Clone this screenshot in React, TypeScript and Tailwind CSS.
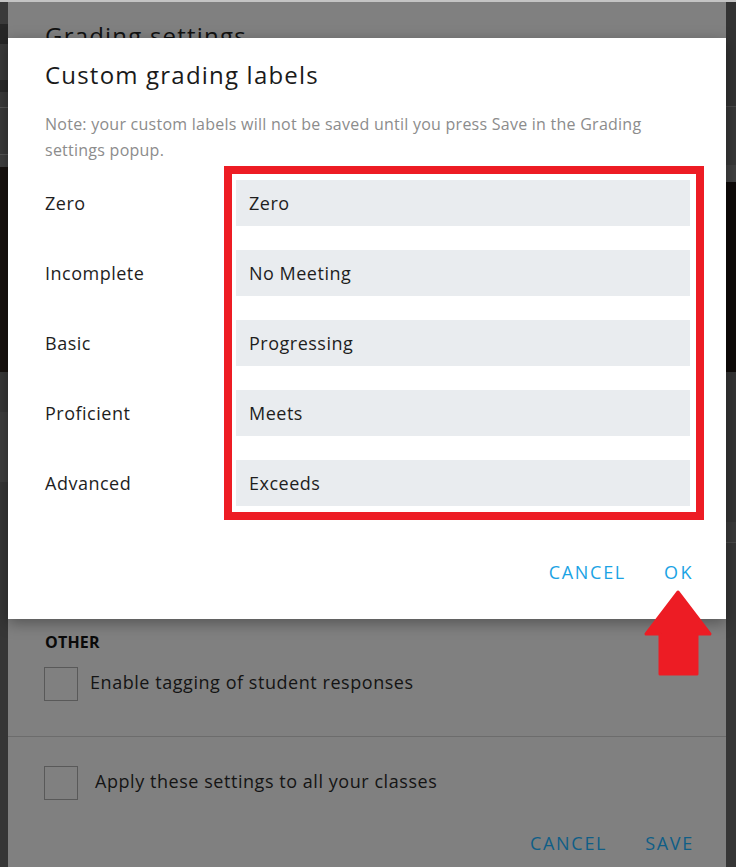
import React from "react";

const labels: [string, string][] = [
  ["Zero", "Zero"],
  ["Incomplete", "No Meeting"],
  ["Basic", "Progressing"],
  ["Proficient", "Meets"],
  ["Advanced", "Exceeds"],
];

function LeftStrip() {
  return (
    <div className="w-[8px] flex flex-col bg-[#3a3a3a]">
      <div className="h-[22px]" />
      <div className="h-[20px] bg-[#262626]" />
      <div className="h-[36px]" />
      <div className="h-[12px] bg-[#2a2a2a]" />
      <div className="h-[15px]" />
      <div className="h-[1px] bg-[#565656]" />
      <div className="h-[46px]" />
      <div className="h-[1px] bg-[#565656]" />
      <div className="h-[12px] bg-[#3f3f3f]" />
      <div className="h-[205px] bg-[#17120f]" />
      <div className="h-[40px] bg-[#383838]" />
      <div className="h-[70px] bg-[#3e3e3e]" />
      <div className="flex-1 bg-[#363636]" />
    </div>
  );
}

function RightStrip() {
  return (
    <div className="w-[10px] flex flex-col bg-[#333333]">
      <div className="h-[104px]" />
      <div className="h-[1px] bg-[#4a4a4a]" />
      <div className="h-[58px] bg-[#383838]" />
      <div className="h-[17px] bg-[#414141]" />
      <div className="h-[190px] bg-[#0f0b09]" />
      <div className="h-[150px] bg-[#343434]" />
      <div className="h-[20px] bg-[#3a3a3a]" />
      <div className="h-[1px] bg-[#4a4a4a]" />
      <div className="flex-1 bg-[#363636]" />
    </div>
  );
}

function Checkbox() {
  return <div className="w-[34px] h-[34px] border border-[#595959] shrink-0" />;
}

export default function App() {
  return (
    <div className="relative w-[736px] h-[867px] overflow-hidden bg-[#3a3a3a] font-['Open_Sans',sans-serif]">
      <div className="h-[2px] bg-[#c4c4c4]" />
      <div className="flex h-[865px]">
        <LeftStrip />
        {/* underlying Grading settings dialog (dimmed) */}
        <div className="w-[718px] bg-[#808080] flex flex-col pt-[18px]">
          <div className="pl-[37px] text-[24px] leading-[32px] tracking-[1.2px] text-[#121212]">
            Grading settings
          </div>
          <div className="h-[579px]" />
          <div className="pl-[37px] text-[16px] leading-[22px] font-bold text-[#0a0a0a] tracking-[0.2px]">
            OTHER
          </div>
          <div className="mt-[14px] pl-[36px] flex items-center h-[34px]">
            <Checkbox />
            <span className="ml-[12px] -mt-[3px] text-[18px] tracking-[0.55px] text-[#141414]">
              Enable tagging of student responses
            </span>
          </div>
          <div className="mt-[35px] h-[1px] bg-[#6c6c6c]" />
          <div className="mt-[29px] pl-[36px] flex items-center h-[34px]">
            <Checkbox />
            <span className="ml-[17px] -mt-[3px] text-[18px] tracking-[0.55px] text-[#141414]">
              Apply these settings to all your classes
            </span>
          </div>
          <div className="mt-[31px] flex justify-end gap-[38px] pr-[32px] text-[18px] leading-[24px] tracking-[1.7px] text-[#0f5e87]">
            <span>CANCEL</span>
            <span>SAVE</span>
          </div>
        </div>
        <RightStrip />
      </div>

      {/* Custom grading labels dialog */}
      <div className="absolute left-[8px] top-[38px] w-[718px] bg-white pt-[21px] pl-[37px] pr-[22px] pb-[35px] shadow-[0_4px_14px_rgba(0,0,0,0.35)]">
        <div className="text-[24px] leading-[32px] tracking-[1.2px] text-[#1a1a1a]">
          Custom grading labels
        </div>
        <div className="mt-[20px] text-[16px] leading-[26px] tracking-[0.25px] text-[#8c8c8c]">
          Note: your custom labels will not be saved until you press Save in the Grading
          <br />
          settings popup.
        </div>
        <div className="mt-[3px] flex">
          <div className="w-[179px] pt-[14px] flex flex-col gap-[24px]">
            {labels.map(([l]) => (
              <div key={l} className="h-[46px] flex items-center text-[18px] tracking-[0.5px] text-[#1e1e1e]">
                {l}
              </div>
            ))}
          </div>
          <div className="w-[480px] border-[8px] border-[#ed1c24] pt-[6px] pb-[6px] pl-[4px] pr-[6px] flex flex-col gap-[24px]">
            {labels.map(([l, v]) => (
              <div key={l} className="h-[46px] bg-[#e9ecef] pl-[13px] flex items-center text-[18px] tracking-[0.5px] text-[#1e1e1e]">
                {v}
              </div>
            ))}
          </div>
        </div>
        <div className="mt-[40px] pr-[10px] flex justify-end gap-[38px] text-[18px] leading-[24px] tracking-[1.7px] text-[#1ba3e4]">
          <span>CANCEL</span>
          <span className="tracking-[2.5px]">OK</span>
        </div>
      </div>

      {/* red arrow annotation */}
      <svg className="absolute left-0 top-0" width="736" height="867" viewBox="0 0 736 867">
        <polygon
          points="678,592 710,634 697,634 697,674 660,674 660,634 646,634"
          fill="#ed1c24"
          stroke="#ed1c24"
          strokeWidth="3"
          strokeLinejoin="round"
        />
      </svg>
    </div>
  );
}
